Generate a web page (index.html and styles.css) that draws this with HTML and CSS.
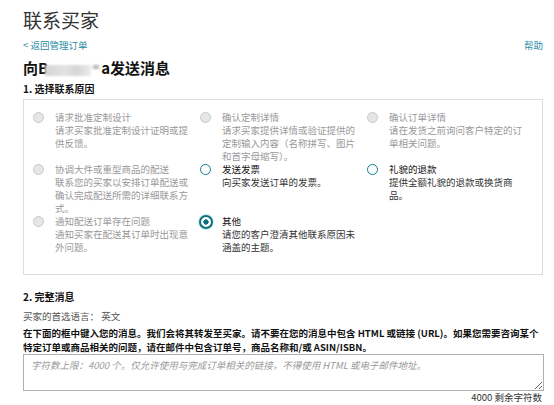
FILE: index.html
```html
<!DOCTYPE html>
<html lang="zh-CN">
<head>
<meta charset="utf-8">
<title>联系买家</title>
<link rel="stylesheet" href="styles.css">
</head>
<body>
<div class="page">
  <h1 class="title">联系买家</h1>
  <div class="nav-row">
    <a class="link" href="#">&lt; 返回管理订单</a>
    <a class="link" href="#">帮助</a>
  </div>
  <h2 class="heading">向B<span class="blur"><span class="blur-a"></span><span class="blur-b"></span></span>a发送消息</h2>
  <h3 class="step">1. 选择联系原因</h3>
  <div class="reasons">
    <div class="reason disabled">
      <span class="radio"></span>
      <div class="reason-text">
        <div class="reason-title">请求批准定制设计</div>
        <div class="reason-desc">请求买家批准定制设计证明或提供反馈。</div>
      </div>
    </div>
    <div class="reason disabled">
      <span class="radio"></span>
      <div class="reason-text">
        <div class="reason-title">确认定制详情</div>
        <div class="reason-desc">请求买家提供详情或验证提供的定制输入内容（名称拼写、图片和首字母缩写）。</div>
      </div>
    </div>
    <div class="reason disabled">
      <span class="radio"></span>
      <div class="reason-text">
        <div class="reason-title">确认订单详情</div>
        <div class="reason-desc">请在发货之前询问客户特定的订单相关问题。</div>
      </div>
    </div>
    <div class="reason disabled">
      <span class="radio"></span>
      <div class="reason-text">
        <div class="reason-title">协调大件或重型商品的配送</div>
        <div class="reason-desc">联系您的买家以安排订单配送或确认完成配送所需的详细联系方式。</div>
      </div>
    </div>
    <div class="reason">
      <span class="radio"></span>
      <div class="reason-text">
        <div class="reason-title">发送发票</div>
        <div class="reason-desc">向买家发送订单的发票。</div>
      </div>
    </div>
    <div class="reason">
      <span class="radio"></span>
      <div class="reason-text">
        <div class="reason-title">礼貌的退款</div>
        <div class="reason-desc">提供全额礼貌的退款或换货商品。</div>
      </div>
    </div>
    <div class="reason disabled">
      <span class="radio"></span>
      <div class="reason-text">
        <div class="reason-title">通知配送订单存在问题</div>
        <div class="reason-desc">通知买家在配送其订单时出现意外问题。</div>
      </div>
    </div>
    <div class="reason selected">
      <span class="radio"></span>
      <div class="reason-text">
        <div class="reason-title">其他</div>
        <div class="reason-desc">请您的客户澄清其他联系原因未涵盖的主题。</div>
      </div>
    </div>
  </div>
  <h3 class="step step-2">2. 完整消息</h3>
  <p class="lang">买家的首选语言： 英文</p>
  <p class="instructions">在下面的框中键入您的消息。我们会将其转发至买家。请不要在您的消息中包含 HTML 或链接 (URL)。如果您需要咨询某个特定订单或商品相关的问题，请在邮件中包含订单号，商品名称和/或 ASIN/ISBN。</p>
  <textarea class="message" placeholder="字符数上限：4000 个。仅允许使用与完成订单相关的链接，不得使用 HTML 或电子邮件地址。"></textarea>
  <div class="counter">4000 剩余字符数</div>
</div>
</body>
</html>
```
FILE: styles.css
```css
* {
  box-sizing: border-box;
}

html, body {
  margin: 0;
  padding: 0;
  background: #ffffff;
}

body {
  font-family: "Noto Sans CJK SC", "Noto Sans", "Liberation Sans", sans-serif;
  font-size: 9.5px;
  color: #111111;
}

.page {
  padding: 8px 11px 0 23px;
}

.title {
  margin: 0;
  font-size: 19px;
  line-height: 24px;
  font-weight: 400;
  color: #333333;
}

.nav-row {
  display: flex;
  justify-content: space-between;
  margin-top: 7px;
  line-height: 13px;
}

.link {
  color: #2a8ca5;
  text-decoration: none;
  font-size: 9.5px;
}

.heading {
  margin: 6px 0 0;
  font-size: 15px;
  line-height: 20px;
  font-weight: 700;
  color: #111111;
}

.blur {
  display: inline-block;
  position: relative;
  width: 56px;
  height: 10px;
  margin-left: -3px;
  vertical-align: -1px;
}

.blur-a {
  position: absolute;
  left: 0;
  top: 0;
  width: 46px;
  height: 11px;
  background: linear-gradient(to right, #d4d4d4, #e2e2e2 40%, #d6d6d6 70%, #ececec);
  filter: blur(1.2px);
}

.blur-b {
  position: absolute;
  left: 48px;
  top: 0;
  width: 6px;
  height: 4px;
  background: #b9b9b9;
  filter: blur(0.8px);
}

.step {
  margin: 4px 0 0;
  font-size: 10px;
  line-height: 13px;
  font-weight: 700;
  color: #111111;
}

.reasons {
  margin-top: 4px;
  border: 1px solid #dddddd;
  padding: 11px 9px 20px;
  display: grid;
  grid-template-columns: repeat(3, 167px);
}

.reason {
  display: flex;
  align-items: flex-start;
  gap: 11px;
  line-height: 13px;
  color: #111111;
}

.radio {
  flex: none;
  width: 11px;
  height: 11px;
  margin-top: 1px;
  border-radius: 50%;
  border: 1.5px solid #0b7f91;
  background: #ffffff;
}

.reason.disabled .radio {
  border: 1px solid #c8c8c8;
  background: #e6e6e6;
}

.reason.selected .radio {
  width: 14px;
  height: 14px;
  margin-top: -0.5px;
  margin-left: -1.5px;
  margin-right: -1.5px;
  border: 2.5px solid #0b6f80;
  background: radial-gradient(circle, #0b6f80 0 2.4px, #ffffff 2.9px);
  box-shadow: 0 0 0 1px #c7e6ea;
}

.reason-text {
  width: 137px;
}

.reason-title {
  color: #111111;
}

.reason-desc {
  color: #333333;
}

.reason.disabled .reason-title,
.reason.disabled .reason-desc {
  color: #999999;
}

.step-2 {
  margin-top: 15px;
}

.lang {
  margin: 7px 0 0;
  line-height: 13px;
  color: #555555;
}

.instructions {
  margin: 4px 0 0;
  line-height: 13.5px;
  font-weight: 700;
  color: #111111;
}

.message {
  display: block;
  width: 521px;
  height: 37px;
  margin: 0;
  padding: 4px 7px;
  border: 1px solid #a9b1b3;
  border-radius: 0;
  font-family: "Noto Sans CJK SC", "Noto Sans", "Liberation Sans", sans-serif;
  font-size: 9.5px;
  line-height: 13px;
  resize: vertical;
  outline: none;
}

.message::placeholder {
  color: #999999;
  font-style: italic;
}

.counter {
  width: 519px;
  text-align: right;
  line-height: 13px;
  color: #333333;
}
```
